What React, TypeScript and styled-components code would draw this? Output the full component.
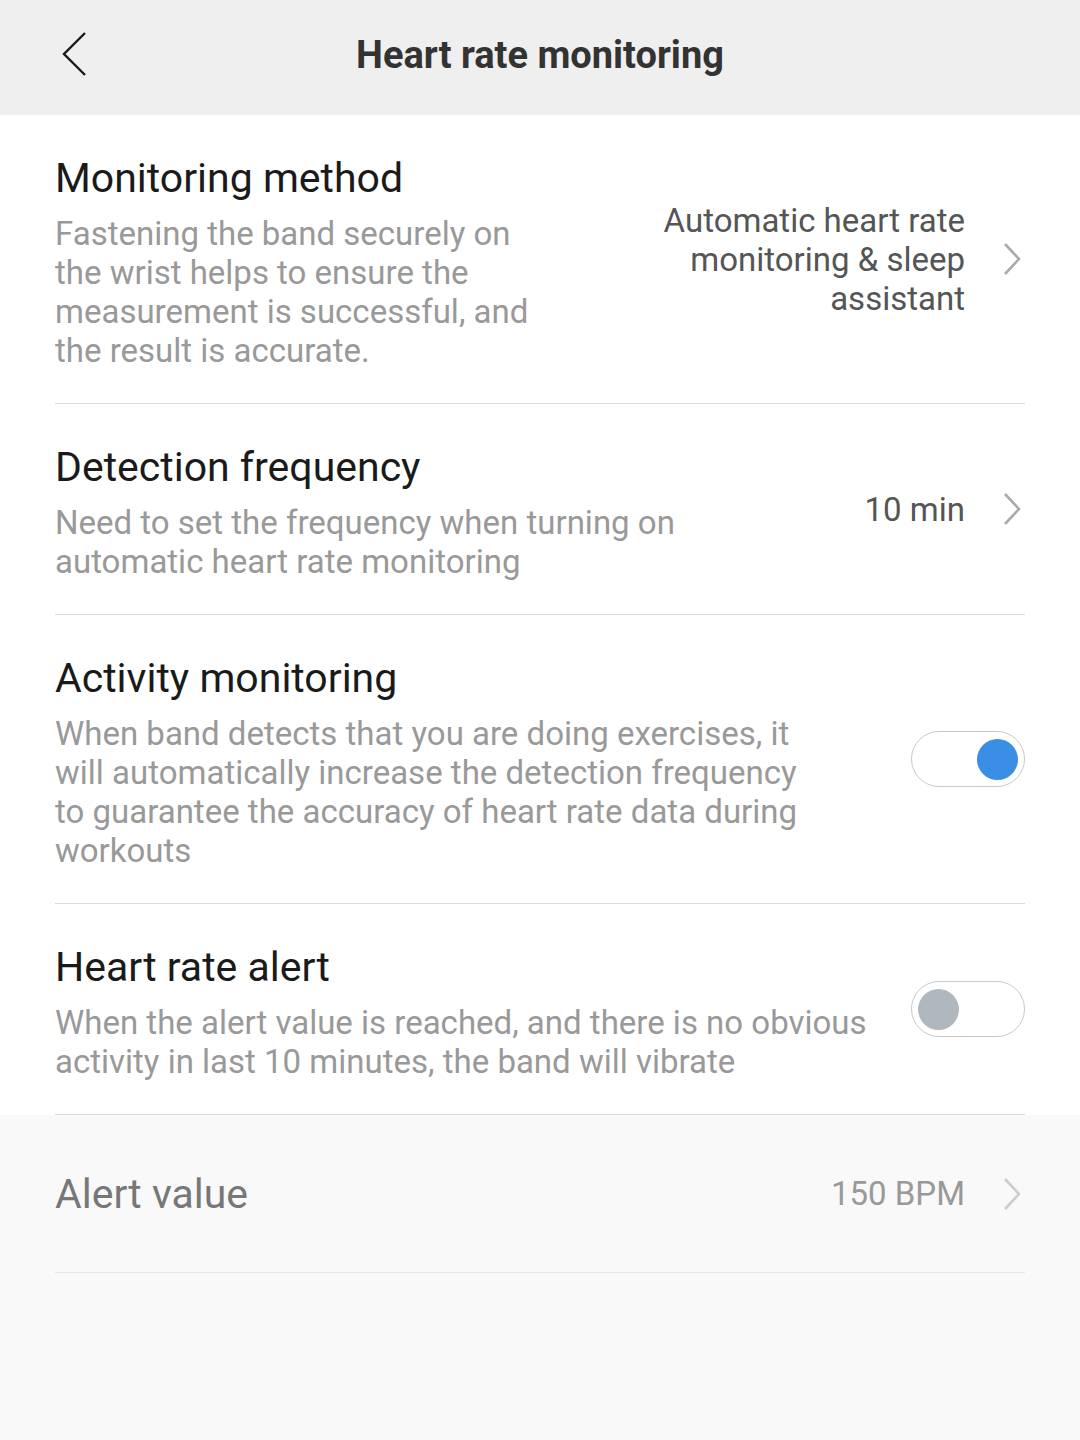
import React from 'react';
import styled, { createGlobalStyle } from 'styled-components';

const GlobalStyle = createGlobalStyle`
    html, body {
        margin: 0;
        padding: 0;
        background: #f9f9f9;
    }
    body {
        font-family: Roboto, "Liberation Sans", sans-serif;
    }
    * {
        box-sizing: border-box;
    }
`;

const Page = styled.div`
    width: 1080px;
    min-height: 1440px;
    background: #f9f9f9;
`;

const Header = styled.header`
    position: relative;
    height: 115px;
    background: #efefef;
    display: flex;
    align-items: center;
    justify-content: center;
    padding-bottom: 6px;
`;
const BackButton = styled.button`
    position: absolute;
    left: 56px;
    top: 30px;
    width: 36px;
    height: 48px;
    padding: 0;
    border: none;
    background: none;
    display: flex;
    align-items: center;
    justify-content: center;
`;
const Title = styled.h1`
    margin: 0;
    font-size: 38px;
    font-weight: 700;
    color: #333;
`;

const List = styled.div`
    background: #fff;
    padding: 0 55px;
`;
const Row = styled.div<{ $light?: boolean }>`
    display: flex;
    align-items: center;
    justify-content: space-between;
    border-bottom: 1px solid ${props => props.$light ? '#e6e6e6' : '#dadada'};
`;
const TextField = styled.div`
    padding: 39px 0 33px;
`;
const Label = styled.div<{ $dim?: boolean }>`
    font-size: 41px;
    line-height: 48px;
    color: ${props => props.$dim ? '#777' : '#1a1a1a'};
`;
const Description = styled.div<{ $width: number }>`
    margin-top: 12px;
    max-width: ${props => props.$width}px;
    font-size: 33px;
    line-height: 39px;
    color: #999;
`;
const ValueField = styled.div`
    display: flex;
    align-items: center;
    flex-shrink: 0;
`;
const Value = styled.div<{ $dim?: boolean }>`
    text-align: right;
    font-size: 33px;
    line-height: 39px;
    color: ${props => props.$dim ? '#999' : '#555'};
    margin-right: 38px;
`;
const Chevron = styled.svg`
    margin-right: 4px;
    display: block;
`;

const DisabledList = styled.div`
    padding: 0 55px;
    background: #f9f9f9;
`;
const AlertRow = styled(Row)`
    height: 158px;
`;

const Toggle = styled.div<{ $on: boolean }>`
    flex-shrink: 0;
    width: 114px;
    height: 56px;
    border: 1px solid #c9c9c9;
    border-radius: 28px;
    background: #fff;
    display: flex;
    align-items: center;
    justify-content: ${props => props.$on ? 'flex-end' : 'flex-start'};
    padding: 0 6px;
`;
const Knob = styled.div<{ $on: boolean }>`
    width: 41px;
    height: 41px;
    border-radius: 50%;
    background: ${props => props.$on ? '#3a8ee6' : '#b0b8bf'};
`;

const Arrow = ({ color }: { color: string }) => (
    <Chevron width="18" height="34" viewBox="0 0 18 34">
        <path d="M2 2 L16 17 L2 32" fill="none" stroke={color} strokeWidth="2.6" strokeLinejoin="miter" />
    </Chevron>
);

type Setting = {
    label: string,
    description: string,
    width: number,
    value?: string[],
    toggle?: boolean,
}

const settings: Setting[] = [
    {
        label: 'Monitoring method',
        description: 'Fastening the band securely on the wrist helps to ensure the measurement is successful, and the result is accurate.',
        width: 490,
        value: ['Automatic heart rate', 'monitoring & sleep', 'assistant'],
    },
    {
        label: 'Detection frequency',
        description: 'Need to set the frequency when turning on automatic heart rate monitoring',
        width: 700,
        value: ['10 min'],
    },
    {
        label: 'Activity monitoring',
        description: 'When band detects that you are doing exercises, it will automatically increase the detection frequency to guarantee the accuracy of heart rate data during workouts',
        width: 765,
        toggle: true,
    },
    {
        label: 'Heart rate alert',
        description: 'When the alert value is reached, and there is no obvious activity in last 10 minutes, the band will vibrate',
        width: 840,
        toggle: false,
    },
];

const App = () => {
    return (
        <Page>
            <GlobalStyle />
            <Header>
                <BackButton>
                    <svg width="28" height="46" viewBox="0 0 28 46">
                        <path d="M25 2 L4 23 L25 44" fill="none" stroke="#1a1a1a" strokeWidth="2.4" />
                    </svg>
                </BackButton>
                <Title>Heart rate monitoring</Title>
            </Header>
            <List>
                {settings.map(item => (
                    <Row key={item.label}>
                        <TextField>
                            <Label>{item.label}</Label>
                            <Description $width={item.width}>{item.description}</Description>
                        </TextField>
                        {item.value ? (
                            <ValueField>
                                <Value>
                                    {item.value.map(line => <div key={line}>{line}</div>)}
                                </Value>
                                <Arrow color="#aaa" />
                            </ValueField>
                        ) : (
                            <Toggle $on={!!item.toggle}>
                                <Knob $on={!!item.toggle} />
                            </Toggle>
                        )}
                    </Row>
                ))}
            </List>
            <DisabledList>
                <AlertRow $light>
                    <Label $dim>Alert value</Label>
                    <ValueField>
                        <Value $dim>150 BPM</Value>
                        <Arrow color="#ccc" />
                    </ValueField>
                </AlertRow>
            </DisabledList>
        </Page>
    );
};

export default App;
